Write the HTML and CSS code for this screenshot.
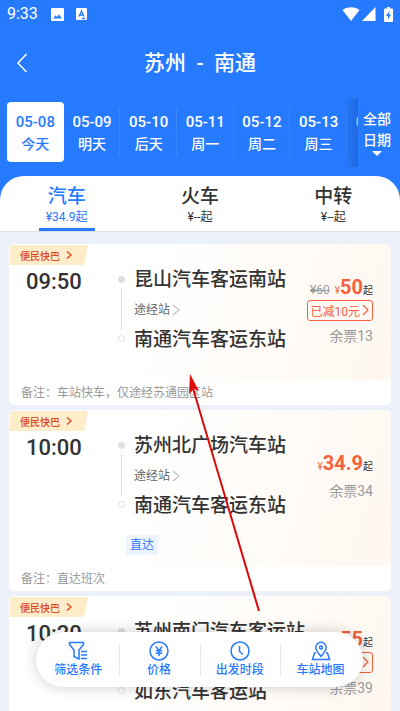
FILE: index.html
```html
<!DOCTYPE html>
<html lang="zh-CN">
<head>
<meta charset="utf-8">
<meta name="viewport" content="width=device-width, initial-scale=1">
<title>苏州 - 南通</title>
<link rel="stylesheet" href="styles.css">
</head>
<body>
<div class="app">
  <header class="top">
    <div class="status">
      <span class="clock">9:33</span>
      <svg class="s-pic" width="13" height="13" viewBox="0 0 13 13"><path fill="#fff" fill-rule="evenodd" d="M1 0h11a1 1 0 0 1 1 1v11a1 1 0 0 1-1 1H1a1 1 0 0 1-1-1V1a1 1 0 0 1 1-1zM2 10.500h9L8 6.500l-2 2.500-1.500-1.700z"/></svg>
      <svg class="s-app" width="11" height="12" viewBox="0 0 11 12"><rect width="11" height="12" rx="1" fill="#fff"/><path d="M3 8.500 5.500 3 8 8.500M3.800 7h3.400M6 10.500h3" fill="none" stroke="#267aff" stroke-width="1.300"/></svg>
      <span class="spacer"></span>
      <svg width="18" height="14" viewBox="0 0 18 14"><path fill="#fff" d="M9 14 .5 3C5 -.8 13 -.8 17.500 3z"/></svg>
      <svg class="s-sig" width="14" height="14" viewBox="0 0 14 14"><path fill="#fff" d="M13.500 0v14H0z"/></svg>
      <svg class="s-bat" width="9" height="15" viewBox="0 0 9 15"><path fill="#fff" d="M3 0h3v1.500h2q1 0 1 1V14q0 1-1 1H1q-1 0-1-1V2.500q0-1 1-1h2z"/><path fill="#267aff" d="M5.500 3.800 2 9h2v3.600L7 7.500H5z"/></svg>
    </div>
    <div class="nav">
      <button class="back" aria-label="返回"><svg width="12" height="20" viewBox="0 0 12 20"><path d="M10.500 1 2 10l8.500 9" fill="none" stroke="#fff" stroke-width="1.500"/></svg></button>
      <h1>苏州&nbsp; - &nbsp;南通</h1>
    </div>
    <div class="dates">
      <div class="strip">
        <button class="day on"><b>05-08</b><span>今天</span></button>
        <button class="day"><b>05-09</b><span>明天</span></button>
        <button class="day"><b>05-10</b><span>后天</span></button>
        <button class="day"><b>05-11</b><span>周一</span></button>
        <button class="day"><b>05-12</b><span>周二</span></button>
        <button class="day"><b>05-13</b><span>周三</span></button>
        <button class="day"><b>05-14</b><span>周四</span></button>
      </div>
      <button class="all"><span>全部</span><span>日期</span><svg width="10" height="5" viewBox="0 0 10 5"><path fill="#fff" d="M0 0h10L5 5z"/></svg></button>
    </div>
    <nav class="tabs">
      <a href="#bus" class="tab on"><strong>汽车</strong><span>¥34.9起</span></a>
      <a href="#train" class="tab"><strong>火车</strong><span>¥--起</span></a>
      <a href="#transfer" class="tab"><strong>中转</strong><span>¥--起</span></a>
    </nav>
  </header>

  <main class="list">
    <article class="card">
      <div class="main">
        <a href="#express" class="badge">便民快巴<svg width="6" height="8" viewBox="0 0 6 8"><path d="M1 .5 5 4 1 7.500" fill="none" stroke="#d9481f" stroke-width="1.300"/></svg></a>
        <div class="row">
          <time class="time">09:50</time>
          <div class="route">
            <div class="rail"><i class="dot"></i><i class="line"></i><i class="ring"></i></div>
            <div class="stops">
              <h2>昆山汽车客运南站</h2>
              <a href="#via" class="via">途经站<svg width="8" height="12" viewBox="0 0 8 12"><path d="M1 1l6 5-6 5" fill="none" stroke="#c4c4c8" stroke-width="1.300"/></svg></a>
              <h2>南通汽车客运东站</h2>
            </div>
          </div>
          <div class="fare">
            <p class="price"><del>¥60</del><small>¥</small><b>50</b><span>起</span></p>
            <button class="cut">已减10元<svg width="7" height="12" viewBox="0 0 7 12"><path d="M1 1l5 5-5 5" fill="none" stroke="#f6603c" stroke-width="1.200"/></svg></button>
            <p class="left">余票13</p>
          </div>
        </div>
      </div>
      <p class="remark">备注：车站快车，仅途经苏通园区站</p>
    </article>

    <article class="card">
      <div class="main">
        <a href="#express" class="badge">便民快巴<svg width="6" height="8" viewBox="0 0 6 8"><path d="M1 .5 5 4 1 7.500" fill="none" stroke="#d9481f" stroke-width="1.300"/></svg></a>
        <div class="row">
          <time class="time">10:00</time>
          <div class="route">
            <div class="rail"><i class="dot"></i><i class="line"></i><i class="ring"></i></div>
            <div class="stops">
              <h2>苏州北广场汽车站</h2>
              <a href="#via" class="via">途经站<svg width="8" height="12" viewBox="0 0 8 12"><path d="M1 1l6 5-6 5" fill="none" stroke="#c4c4c8" stroke-width="1.300"/></svg></a>
              <h2>南通汽车客运东站</h2>
            </div>
          </div>
          <div class="fare">
            <p class="price"><small>¥</small><b>34.9</b><span>起</span></p>
            <p class="left">余票34</p>
          </div>
        </div>
        <div class="tags"><span class="tag">直达</span></div>
      </div>
      <p class="remark">备注：直达班次</p>
    </article>

    <article class="card">
      <div class="main">
        <a href="#express" class="badge">便民快巴<svg width="6" height="8" viewBox="0 0 6 8"><path d="M1 .5 5 4 1 7.500" fill="none" stroke="#d9481f" stroke-width="1.300"/></svg></a>
        <div class="row">
          <time class="time">10:20</time>
          <div class="route">
            <div class="rail"><i class="dot"></i><i class="line"></i><i class="ring"></i></div>
            <div class="stops">
              <h2>苏州南门汽车客运站</h2>
              <a href="#via" class="via">途经站<svg width="8" height="12" viewBox="0 0 8 12"><path d="M1 1l6 5-6 5" fill="none" stroke="#c4c4c8" stroke-width="1.300"/></svg></a>
              <h2>如东汽车客运站</h2>
            </div>
          </div>
          <div class="fare">
            <p class="price"><small>¥</small><b>55</b><span>起</span></p>
            <button class="cut">已减10元<svg width="7" height="12" viewBox="0 0 7 12"><path d="M1 1l5 5-5 5" fill="none" stroke="#f6603c" stroke-width="1.200"/></svg></button>
            <p class="left">余票39</p>
          </div>
        </div>
      </div>
    </article>
  </main>

  <div class="filters">
    <button><svg width="20" height="20" viewBox="0 0 20 20"><path d="M1.500 1.500h14v2L11 9v9l-5-2.500V9L1.500 3.500zM13 10.500h6M13 14h6M13 17.500h6"/></svg><span>筛选条件</span></button>
    <button><svg width="20" height="20" viewBox="0 0 20 20"><circle cx="10" cy="10" r="9"/><path d="M6.800 5.500 10 9.500l3.200-4M10 9.500V15M6.800 9.800h6.400M6.800 12.300h6.400"/></svg><span>价格</span></button>
    <button><svg width="20" height="20" viewBox="0 0 20 20"><circle cx="10" cy="10" r="9"/><path d="M9.500 5v5.500l3.500 3"/></svg><span>出发时段</span></button>
    <button><svg width="20" height="20" viewBox="0 0 20 20"><path d="M10 15.500C7 12 4.800 9.500 4.800 6.500a5.200 5.200 0 0 1 10.400 0c0 3-2.200 5.500-5.200 9z"/><path d="M5 12H3.500l-2 6.500h17l-2-6.500H15"/><circle cx="10" cy="6.500" r="1.500"/></svg><span>车站地图</span></button>
  </div>

  <svg class="pointer" width="78" height="244" viewBox="0 0 78 244" aria-hidden="true"><path d="M6 14 73 240" stroke="#d90b0b" stroke-width="2" fill="none"/><path d="M4 3 13 20 8 18 3 23z" fill="#e00d0d"/></svg>
</div>
</body>
</html>
```

FILE: styles.css
```css
* { box-sizing: border-box; }
body, h1, h2, p { margin: 0; }
body {
  font-family: Roboto, "Noto Sans CJK SC", sans-serif;
  background: #ecf0f9;
  color: #333;
}
button {
  font: inherit;
  color: inherit;
  background: none;
  border: 0;
  padding: 0;
}
a { color: inherit; text-decoration: none; }
svg { display: block; flex: none; }

.app {
  position: relative;
  height: 100vh;
  display: flex;
  flex-direction: column;
  overflow: hidden;
}
.top { background: #267aff; color: #fff; flex: none; }

.status {
  display: flex;
  align-items: center;
  height: 28px;
  padding: 0 7px;
}
.clock { font-size: 16px; line-height: 20px; width: 44px; }
.s-app { margin-left: 12px; }
.spacer { flex: 1; }
.s-sig { margin-left: 2px; }
.s-bat { margin-left: 8px; }

.nav {
  display: grid;
  grid-template-columns: 44px 1fr 44px;
  align-items: center;
  height: 70px;
}
.back { justify-self: center; }
.nav h1 {
  font-size: 21px;
  line-height: 28px;
  font-weight: 500;
  text-align: center;
}

.dates { display: flex; height: 78px; }
.strip {
  position: relative;
  flex: 1;
  display: flex;
  height: 69px;
  padding: 4px 0 5px 7px;
  overflow: hidden;
}
.strip::after {
  content: "";
  position: absolute;
  top: 0;
  bottom: 0;
  right: 0;
  width: 14px;
  background: linear-gradient(90deg, rgba(20, 70, 160, 0), rgba(20, 70, 160, 0.35));
}
.day {
  flex: 0 0 calc((100% - 11px) / 6);
  display: flex;
  flex-direction: column;
  align-items: center;
  justify-content: center;
  padding-top: 1px;
  font-size: 14px;
  line-height: 22px;
  font-weight: 500;
  background: linear-gradient(#3a86ff, #3a86ff) right center / 1px 50px no-repeat;
}
.day b { font-size: 15px; font-weight: 500; }
.day.on { background: #fff; color: #267aff; border-radius: 4px; }
.all {
  width: 42px;
  height: 69px;
  display: flex;
  flex-direction: column;
  align-items: center;
  justify-content: center;
  padding-right: 4px;
  font-size: 14px;
  line-height: 21px;
  font-weight: 500;
}

.tabs {
  display: flex;
  height: 56px;
  background: #fff;
  color: #333;
  border-radius: 24px 24px 0 0;
  border-bottom: 1px solid #dde1ea;
}
.tab {
  flex: 1;
  display: flex;
  flex-direction: column;
  align-items: center;
  padding-top: 8px;
  font-size: 12px;
  line-height: 16px;
}
.tab strong { font-size: 19px; line-height: 25px; font-weight: 500; }
.tab.on { color: #267aff; }
.tab.on::after {
  content: "";
  width: 56px;
  height: 3px;
  margin-top: auto;
  background: #267aff;
}

.list {
  flex: 1;
  min-height: 0;
  overflow: hidden;
  padding: 12px 9px 0;
  display: flex;
  flex-direction: column;
  gap: 5px;
}
.card { flex: none; background: #fff; border-radius: 5px; }
.main {
  position: relative;
  border-radius: 5px;
  background: linear-gradient(105deg, #fff 35%, #fffcf9 60%, #fef7f0);
}
.badge {
  position: absolute;
  top: 1px;
  left: 1px;
  display: flex;
  align-items: center;
  gap: 6px;
  width: 78px;
  height: 20px;
  padding-left: 10px;
  font-size: 10px;
  font-weight: 500;
  color: #d9481f;
  background: #ffecc8;
  border-radius: 4px 0 0 0;
  clip-path: polygon(0 0, 100% 0, 95% 100%, 0 100%);
}
.row {
  display: grid;
  grid-template-columns: 108px 1fr auto;
  height: 136px;
  padding-right: 18px;
}
.time {
  padding: 25px 0 0 17px;
  font-size: 22px;
  line-height: 26px;
  font-weight: 500;
}
.route { display: flex; gap: 9px; padding-top: 21px; }
.rail {
  display: flex;
  flex-direction: column;
  align-items: center;
  width: 8px;
  padding-top: 11px;
}
.dot, .ring { width: 7px; height: 7px; border-radius: 50%; }
.dot { background: #e0e0e0; }
.ring { border: 1px solid #dedede; }
.line { width: 1px; height: 42px; margin: 5px 0; background: #ddd; }
.stops h2 {
  font-size: 19px;
  line-height: 30px;
  font-weight: 500;
  white-space: nowrap;
}
.via {
  display: flex;
  align-items: center;
  gap: 2px;
  font-size: 12px;
  line-height: 30px;
  color: #666;
}
.fare {
  display: flex;
  flex-direction: column;
  align-items: flex-end;
  justify-content: center;
}
.price {
  display: flex;
  align-items: baseline;
  font-size: 10px;
  line-height: 18px;
}
.price del { font-size: 12px; color: #999; margin-right: 5px; }
.price small { font-size: 10px; color: #f6603c; }
.price b { font-size: 20px; font-weight: 700; color: #f6603c; }
.cut {
  display: flex;
  align-items: center;
  gap: 2px;
  height: 21px;
  padding: 0 3px;
  border: 1px solid #f6603c;
  border-radius: 3px;
  font-size: 12px;
  color: #f6603c;
}
.left { font-size: 14px; line-height: 22px; margin-top: 4px; color: #999; }
.tags { height: 31px; padding-left: 117px; margin-top: -11px; }
.tag {
  display: block;
  width: max-content;
  padding: 0 4px;
  font-size: 12px;
  line-height: 20px;
  color: #267aff;
  background: #eef4ff;
}
.remark {
  padding: 2px 0 0 12px;
  font-size: 12px;
  line-height: 23px;
  color: #999;
}

.filters {
  position: absolute;
  left: 36px;
  right: 37px;
  bottom: 24px;
  height: 55px;
  display: flex;
  padding: 0 2px;
  border-radius: 28px;
  background: #fff;
  box-shadow: 0 0 14px rgba(0, 0, 0, 0.2);
}
.filters button {
  flex: 1;
  display: flex;
  flex-direction: column;
  align-items: center;
  justify-content: center;
  gap: 1px;
  font-size: 12px;
  line-height: 17px;
  font-weight: 500;
  color: #267aff;
}
.filters button + button {
  background: linear-gradient(#e6e6e6, #e6e6e6) left center / 1px 32px no-repeat;
}
.filters svg { fill: none; stroke: #267aff; stroke-width: 1.500; }

.pointer {
  position: absolute;
  left: 186px;
  top: 371px;
  pointer-events: none;
}
```
